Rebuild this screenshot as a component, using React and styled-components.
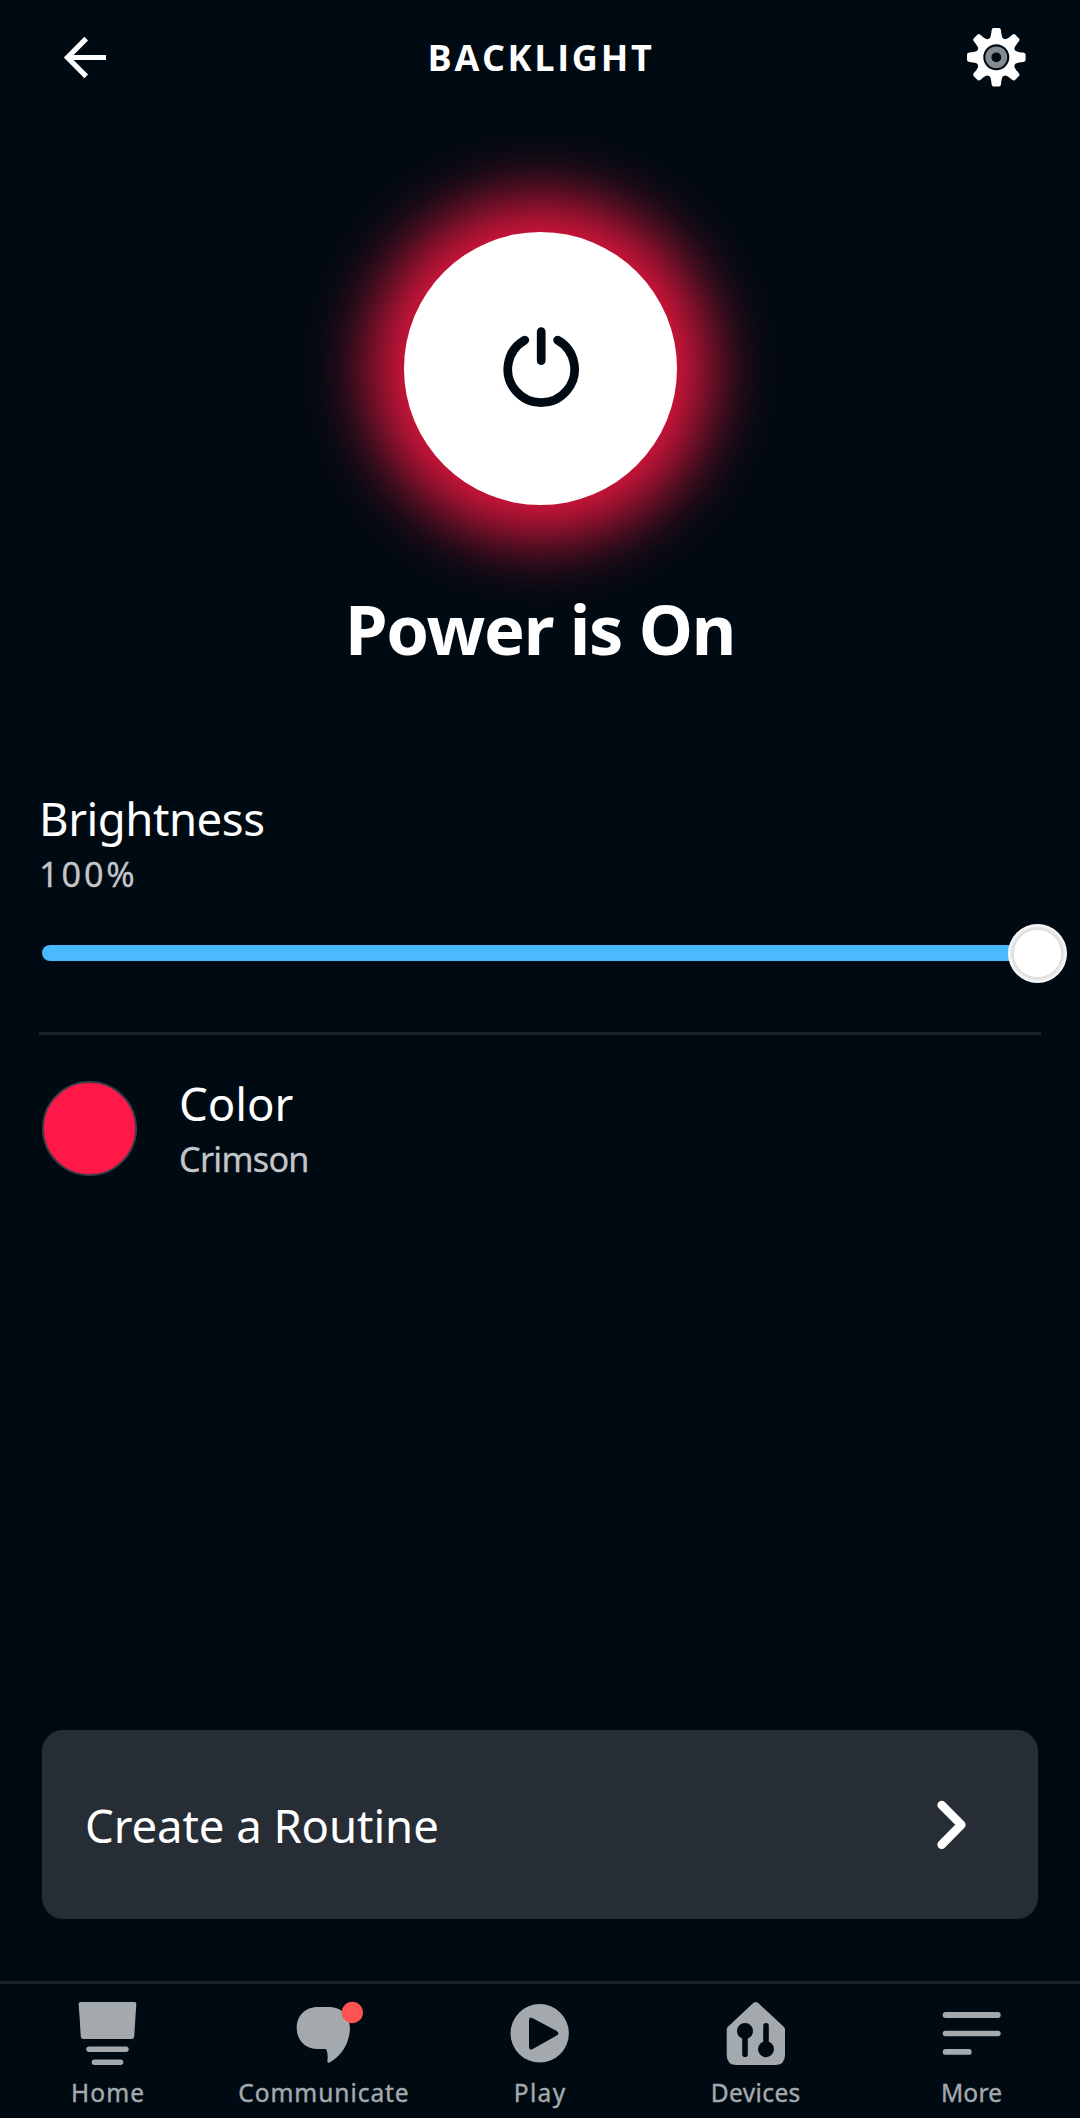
import React from "react";
import styled, { createGlobalStyle } from "styled-components";

const GlobalStyle = createGlobalStyle`
  * { box-sizing: border-box; }
  body { margin: 0; background: #000a12; }
  button { border: 0; padding: 0; background: none; color: inherit; font: inherit; }
`;

const Screen = styled.div`
  display: flex;
  flex-direction: column;
  width: 1080px;
  height: 2118px;
  overflow: hidden;
  background: #000a12;
  color: #fff;
  font-family: "Noto Sans", "Open Sans", sans-serif;
`;

const Header = styled.header`
  display: flex;
  align-items: center;
  justify-content: space-between;
  height: 114px;
  padding: 0 52px 0 53px;
`;

const Title = styled.h1`
  margin: 0;
  padding: 2px 0 0 1px;
  font: 700 36px/50px "Open Sans", "Noto Sans", sans-serif;
  letter-spacing: 2.7px;
`;

const IconButton = styled.button`
  display: flex;
  width: 64px;
  height: 64px;
`;

const PowerSection = styled.section`
  display: flex;
  flex-direction: column;
  align-items: center;
  padding: 118px 0 0 1px;
`;

const PowerButton = styled.button`
  display: grid;
  place-items: center;
  width: 273px;
  height: 273px;
  border-radius: 50%;
  background: #fff;
  box-shadow: 0 0 66px 34px #e8173f;
`;

const Status = styled.h2`
  margin: 82px 0 0;
  padding-right: 1px;
  font-size: 68.6px;
  font-weight: 700;
  line-height: 84px;
  letter-spacing: -1.25px;
`;

const Label = styled.div`
  font-size: 45.5px;
  line-height: ${(p) => p.$line}px;
  letter-spacing: ${(p) => p.$spacing || 0}px;
`;

const Value = styled.div`
  color: #c3c5c8;
  font-size: 34.2px;
  line-height: ${(p) => p.$line}px;
  letter-spacing: ${(p) => p.$spacing || 0}px;
  -webkit-text-stroke: 0.3px currentColor;
`;

const Brightness = styled.section`
  padding: 117px 0 0 39px;
`;

const Slider = styled.div`
  display: flex;
  align-items: center;
  height: 58px;
  margin: 24px 13px 0 3px;
`;

const Track = styled.div`
  flex: 1;
  height: 16px;
  border-radius: 8px;
  background: #4ab9fd;
`;

const Knob = styled.div`
  flex: none;
  width: 59px;
  height: 59px;
  margin-left: -14px;
  border-radius: 50%;
  background: radial-gradient(circle, #fff 23.2px, #dcdcdc 24px, #e6e6e6 26px, #fafafa 28.5px);
`;

const Divider = styled.hr`
  width: 1002px;
  height: 3px;
  margin: 50px 39px 0;
  border: 0;
  background: #1b242c;
`;

const ColorRow = styled.section`
  display: flex;
  align-items: flex-start;
  gap: 42px;
  height: 112px;
  margin-top: 39px;
  padding-left: 42px;
`;

const Swatch = styled.div`
  width: 95px;
  height: 95px;
  margin-top: 7px;
  border: 2.5px solid #3c3d49;
  border-radius: 50%;
  background: #ff1848;
`;

const RoutineCard = styled.button`
  display: flex;
  align-items: center;
  justify-content: space-between;
  height: 189px;
  margin: auto 42px 62px;
  padding: 0 66px 0 43px;
  border-radius: 21px;
  background: #272d35;
`;

const Nav = styled.nav`
  display: grid;
  grid-template-columns: repeat(5, 1fr);
  height: 137px;
  border-top: 3px solid #1b242c;
  color: #a4a9ad;
`;

const NavItem = styled.a`
  display: flex;
  flex-direction: column;
  align-items: center;
  gap: 13px;
  padding-top: 17px;

  svg {
    overflow: visible;
  }
`;

const NavLabel = styled.span`
  font-size: 24.5px;
  line-height: 30px;
  letter-spacing: ${(p) => p.$spacing}px;
  padding-right: 1px;
  margin-right: ${(p) => -p.$spacing}px;
  -webkit-text-stroke: 0.4px currentColor;
`;

const BackIcon = () => (
  <svg width="64" height="64" viewBox="0 0 64 64" fill="none" stroke="#fff" strokeWidth="5.2">
    <path d="M33.2 13.6 14.5 32.5 33.2 51.4M14.5 32.5H53" />
  </svg>
);

const TEETH = [0, 45, 90, 135, 180, 225, 270, 315];

const GearIcon = () => (
  <svg width="64" height="64" viewBox="-32.3 -32.3 64 64" fill="#fff">
    <circle r="16.5" fill="none" stroke="#fff" strokeWidth="7" />
    {TEETH.map((angle) => (
      <path
        key={angle}
        transform={`rotate(${angle})`}
        d="M-8-17C-6-19-5.2-21-4.700-27Q-4.400-29.300-2.800-29.300H2.800Q4.400-29.300 4.700-27C5.200-21 6-19 8-17Z"
      />
    ))}
    <circle r="7.9" fill="none" stroke="#858a8f" strokeWidth="6" />
  </svg>
);

const PowerIcon = () => (
  <svg width="88" height="88" viewBox="-44 -44 88 88" fill="none" stroke="#000a12" strokeWidth="8.700" strokeLinecap="round">
    <path d="M-16.200-28.900A33.400 33.400 0 1 0 16.600-28.900M.2-37.300V-8.300" />
  </svg>
);

const ChevronIcon = () => (
  <svg width="40" height="56" viewBox="0 0 40 56" fill="none" stroke="#fff" strokeWidth="8.700" strokeLinecap="round" strokeLinejoin="round">
    <path d="M9.700 8 29.300 27.800 9.700 47.600" />
  </svg>
);

const NavSvg = ({ children }) => (
  <svg width="64" height="64" viewBox="0 0 64 64" fill="currentColor">
    {children}
  </svg>
);

const HomeIcon = () => (
  <NavSvg>
    <path d="M4.500 1H58.500Q60.400 1 60.300 3L58.200 35.500Q58 38 55.600 38H7.400Q5 38 4.800 35.500L2.700 3Q2.600 1 4.500 1Z" />
    <rect x="10.300" y="45.500" width="42.400" height="5.500" rx="2.700" />
    <rect x="15.700" y="58.500" width="31.600" height="5.500" rx="2.700" />
  </NavSvg>
);

const CommunicateIcon = () => (
  <NavSvg>
    <path d="M25.700 6H37C49 6 57.900 14.500 57.900 27C57.900 41 50 55 37.500 61.500C36 62.200 35.200 61.200 35.400 59.500C35.900 55.500 35.800 51.500 34 48H25.700C13 48 4.700 39 4.700 27S13 6 25.700 6Z" />
    <circle cx="60.300" cy="11.500" r="10.700" fill="#ff5352" />
  </NavSvg>
);

const PlayIcon = () => (
  <NavSvg>
    <path
      fillRule="evenodd"
      d="M31.700 3.100a29.200 29.200 0 1 0 0 58.400a29.200 29.200 0 1 0 0-58.400ZM24.700 17.200 48.800 30Q51.900 32.300 48.800 34.600L24.700 48Q21 49.900 21 46V19.200Q21 15.300 24.700 17.200Z"
    />
  </NavSvg>
);

const DevicesIcon = () => (
  <NavSvg>
    <path d="M29.500 1.800Q31.700.2 33.900 1.800L60 26Q61 27 61 28.500V54Q61 64 51 64H12.700Q2.700 64 2.700 54V28.500Q2.700 27 3.700 26Z" />
    <g fill="#000a12" stroke="#000a12" strokeWidth="5.600" strokeLinecap="round">
      <path d="M21 30V53.300" />
      <path d="M42 24.800V48" />
      <circle cx="21" cy="30" r="5.200" />
      <circle cx="42" cy="48.200" r="5.200" />
    </g>
  </NavSvg>
);

const MoreIcon = () => (
  <NavSvg>
    <rect x="2.700" y="11.100" width="58" height="5.800" rx="2.900" />
    <rect x="2.700" y="29.700" width="58" height="5.600" rx="2.800" />
    <rect x="2.700" y="48" width="29" height="5.800" rx="2.900" />
  </NavSvg>
);

const NAV_ITEMS = [
  { label: "Home", Icon: HomeIcon, spacing: 1.1 },
  { label: "Communicate", Icon: CommunicateIcon, spacing: 0.95 },
  { label: "Play", Icon: PlayIcon, spacing: 1.3 },
  { label: "Devices", Icon: DevicesIcon, spacing: 0.4 },
  { label: "More", Icon: MoreIcon, spacing: 0.2 },
];

export default function App() {
  return (
    <Screen>
      <GlobalStyle />
      <Header>
        <IconButton aria-label="Back">
          <BackIcon />
        </IconButton>
        <Title>BACKLIGHT</Title>
        <IconButton aria-label="Settings">
          <GearIcon />
        </IconButton>
      </Header>
      <PowerSection>
        <PowerButton aria-label="Power">
          <PowerIcon />
        </PowerButton>
        <Status>Power is On</Status>
      </PowerSection>
      <Brightness>
        <Label $line={60} $spacing={-0.45}>Brightness</Label>
        <Value $line={52} $spacing={2.900}>100%</Value>
        <Slider>
          <Track />
          <Knob />
        </Slider>
      </Brightness>
      <Divider />
      <ColorRow>
        <Swatch />
        <div>
          <Label $line={58}>Color</Label>
          <Value $line={54} $spacing={-0.700}>Crimson</Value>
        </div>
      </ColorRow>
      <RoutineCard>
        <Label as="span" $line={60} $spacing={-0.08}>Create a Routine</Label>
        <ChevronIcon />
      </RoutineCard>
      <Nav>
        {NAV_ITEMS.map(({ label, Icon, spacing }) => (
          <NavItem key={label}>
            <Icon />
            <NavLabel $spacing={spacing}>{label}</NavLabel>
          </NavItem>
        ))}
      </Nav>
    </Screen>
  );
}
